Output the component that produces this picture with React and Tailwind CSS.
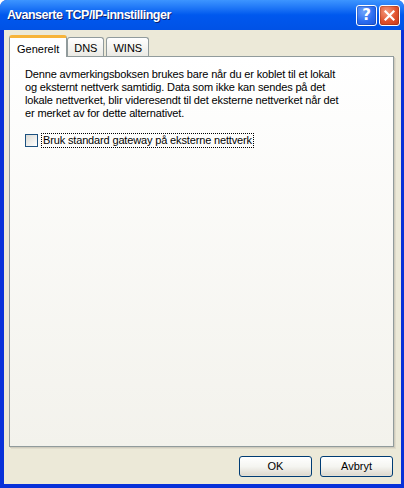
const ui = "[font-family:'Liberation_Sans',Arial,sans-serif]";

function CaptionButton({ kind }) {
  const bg =
    kind === 'close'
      ? 'bg-[radial-gradient(circle_at_35%_30%,#f49a7d_0%,#e0512c_55%,#c3381a_100%)]'
      : 'bg-[radial-gradient(circle_at_35%_30%,#6fa4fb_0%,#2a6cf1_55%,#1a54d8_100%)]';
  return (
    <div className={`w-[21px] h-[21px] rounded-[3px] border border-white ${bg} flex items-center justify-center shadow-[inset_0_0_0_1px_rgba(0,0,0,0.15)]`}>
      {kind === 'close' ? (
        <svg width="11" height="11" viewBox="0 0 11 11">
          <path d="M1.5 1.5 L9.5 9.5 M9.5 1.5 L1.5 9.5" stroke="#fff" strokeWidth="2.2" strokeLinecap="square" />
        </svg>
      ) : (
        <span className="text-white font-bold text-[15px] leading-none [font-family:'DejaVu_Sans',sans-serif]">?</span>
      )}
    </div>
  );
}

function Tab({ label, active }) {
  if (active) {
    return (
      <div className="relative z-10 -mb-px h-[22px] px-[7px] pt-[3px] bg-white border border-b-0 border-[#919b9c] rounded-t-[3px] border-t-[3px] border-t-[#f7b43a] text-[11px] text-black">
        {label}
      </div>
    );
  }
  return (
    <div className="mt-[2px] h-[19px] px-[6px] pt-[2px] bg-gradient-to-b from-white to-[#ebeae4] border border-b-0 border-[#919b9c] rounded-t-[3px] text-[11px] text-black">
      {label}
    </div>
  );
}

function Button({ label }) {
  return (
    <button className="w-[73px] h-[21px] rounded-[3px] border border-[#003c74] bg-gradient-to-b from-white via-[#f5f5f1] to-[#dcd7cc] text-[11px] text-black leading-none shadow-[inset_0_-1px_0_#e3e0d6]">
      {label}
    </button>
  );
}

export default function App() {
  return (
    <div className={`w-[404px] h-[488px] flex flex-col bg-[#0831d9] rounded-t-[7px] overflow-hidden ${ui}`}>
      <div className="h-[30px] shrink-0 flex items-center justify-between pl-[7px] pr-[4px] bg-gradient-to-b from-[#3d95ff] via-[#0058ee] to-[#0052e6]">
        <span className="text-white font-bold text-[12.5px] [text-shadow:1px_1px_0_#0a1e6e] tracking-[-0.5px]">
          Avanserte TCP/IP-innstillinger
        </span>
        <div className="flex gap-[2px]">
          <CaptionButton kind="help" />
          <CaptionButton kind="close" />
        </div>
      </div>

      <div className="flex-1 ml-[4px] mr-[3px] mb-[4px] bg-[#ece9d8] flex flex-col px-[5px] pt-[5px]">
        <div className="flex items-end gap-0">
          <Tab label="Generelt" active />
          <Tab label="DNS" />
          <div className="w-[2px]" />
          <Tab label="WINS" />
        </div>
        <div className="h-[391px] mr-[2px] border border-[#919b9c] bg-gradient-to-b from-white to-[#f3f2ec] shadow-[1px_1px_0_#d0ccbe,2px_2px_0_#e0dccc] px-[15px] pt-[11px]">
          <p className="text-[11px] leading-[13px] text-black whitespace-nowrap tracking-[-0.15px]">
            Denne avmerkingsboksen brukes bare når du er koblet til et lokalt
            <br />
            og eksternt nettverk samtidig. Data som ikke kan sendes på det
            <br />
            lokale nettverket, blir videresendt til det eksterne nettverket når det
            <br />
            er merket av for dette alternativet.
          </p>
          <div className="mt-[13px] flex items-center">
            <div className="w-[13px] h-[13px] border border-[#1c5180] bg-gradient-to-br from-[#dcdbd5] to-white" />
            <span className="ml-[3px] px-[1px] border border-dotted border-black text-[11px] leading-[13px] text-black tracking-[-0.15px]">
              Bruk standard gateway på eksterne nettverk
            </span>
          </div>
        </div>
        <div className="flex justify-end gap-[8px] mt-[9px] mr-[3px]">
          <Button label="OK" />
          <Button label="Avbryt" />
        </div>
      </div>
    </div>
  );
}
